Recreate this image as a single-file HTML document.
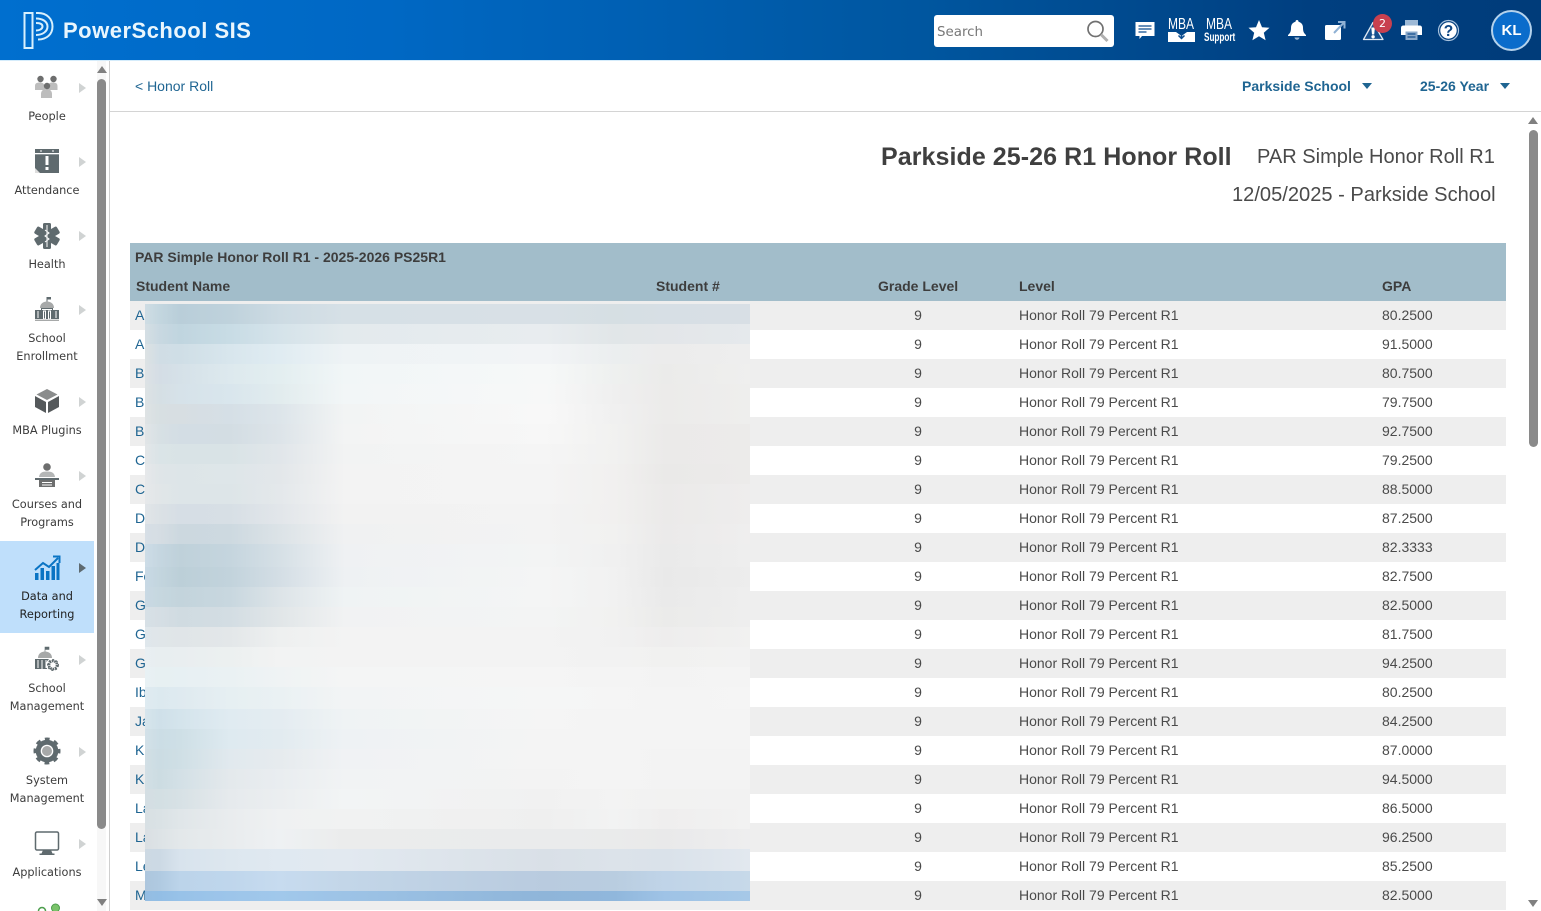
<!DOCTYPE html>
<html><head><meta charset="utf-8"><title>Honor Roll</title>
<style>
html,body{margin:0;padding:0;width:1541px;height:911px;overflow:hidden;background:#fff;font-family:"Liberation Sans",sans-serif;color:#444}
.a{position:absolute;white-space:nowrap}
#hdr{position:absolute;left:0;top:0;width:1541px;height:60px;background:linear-gradient(90deg,#006fcf 0,#0068c4 25%,#00569f 60%,#003f80 85%,#003c7a 100%)}
#hl{position:absolute;left:0;top:60px;width:1541px;height:1px;background:#d5ecfb}
.ni{position:absolute;left:0;width:94px;margin-top:1px;text-align:center;font:11.3px/18px "DejaVu Sans",sans-serif;color:#3c3c3c}
.ar{position:absolute;left:79px;width:0;height:0;border-left:7px solid #d0d3d3;border-top:5px solid transparent;border-bottom:5px solid transparent}
.ic{position:absolute;left:30px}
.r{position:absolute;left:130px;width:1376px;height:29px;font-size:14px;line-height:28px;color:#4a4a4a}
.r.g{background:#eeeeee}
.r span{position:absolute;top:0;white-space:nowrap}
.r .n{left:5px;color:#1f6592}
.r .gr{left:688px;width:200px;text-align:center}
.r .l{left:889px}
.r .p{left:1252px}
.h{position:absolute;font-weight:bold;font-size:14px;color:#3d3d3d;white-space:nowrap}
.t{font-size:14px;font-weight:bold;color:#1f6592}
.tr{position:absolute;width:0;height:0;border-top:6px solid #1f6592;border-left:5.5px solid transparent;border-right:5.5px solid transparent}
.m{position:absolute;left:145px;width:605px}
.mb{position:absolute;font-size:16px;line-height:16px;color:#fff;transform-origin:0 0;transform:scaleX(.75)}
</style></head>
<body>
<div id="hdr"></div><div id="hl"></div>
<svg class="a" style="left:22px;top:11px" width="32" height="38" viewBox="0 0 32 38" fill="none" stroke="#d8f0fd" stroke-width="2"><path d="M2.500 2h8v35h-8z"/><path d="M14 2h2c9 0 14.500 6 14.500 13.500S25 28.500 16 28.500"/><path d="M14 7.500c6.500 0 11.500 3 11.500 8S20.500 24 14 24"/><path d="M14 12c3.500 0 6.500 1 6.500 3.500S17.500 19.500 14 19.500"/></svg>
<div class="a" style="left:63px;top:17px;font-size:22px;line-height:28px;font-weight:bold;color:#e9f6fd;letter-spacing:.5px">PowerSchool SIS</div>

<div class="a" style="left:934px;top:15px;width:180px;height:32px;background:#fff;border-radius:3px"></div>
<div class="a" style="left:937px;top:24px;font:13.4px/18px 'DejaVu Sans',sans-serif;color:#777">Search</div>
<svg class="a" style="left:1085px;top:19px" width="26" height="24" fill="none"><circle cx="10.500" cy="10" r="7.500" stroke="#707070" stroke-width="1.700"/><path d="M16 15.500l6.500 6.500" stroke="#b0b0b0" stroke-width="3"/></svg>
<svg class="a" style="left:1134px;top:21px" width="22" height="20"><path d="M1.500 1h19v14H8l-2.500 3V15h-4z" fill="#fff"/><path d="M4.500 5h13M4.500 8h13M4.500 11h8" stroke="#0a4c8f" stroke-width="1.200"/></svg>
<div class="mb" style="left:1168px;top:17px">MBA</div>
<svg class="a" style="left:1168px;top:32px" width="27" height="10"><path d="M0 0h8l5.500 4L19 0h8v10H0z" fill="#fff"/><path d="M13.500 1v5M10.500 3.500l3 3 3-3" stroke="#0a4c8f" fill="none" stroke-width="1.500"/></svg>
<div class="mb" style="left:1206px;top:17px">MBA</div>
<div class="a" style="left:1204px;top:31px;font-size:12px;line-height:12px;font-weight:bold;color:#fff;transform-origin:0 0;transform:scaleX(.68)">Support</div>
<svg class="a" style="left:1247px;top:18px" width="24" height="24"><path d="M12 2l3 7.200 7.500.6-5.700 5 1.800 7.400L12 18.300l-6.600 3.900 1.800-7.400-5.700-5L9 9.200z" fill="#fff"/></svg>
<svg class="a" style="left:1286px;top:19px" width="22" height="23"><path d="M11 1c1 0 1.500.7 1.500 1.800 3 .8 4.500 3 4.500 6 0 4 1 5.500 3 7.200v1H2v-1c2-1.700 3-3.200 3-7.200 0-3 1.500-5.200 4.500-6C9.500 1.700 10 1 11 1z" fill="#fff"/><path d="M8.500 18.500h5c-.3 1.500-1.200 2.200-2.500 2.200s-2.200-.7-2.500-2.200z" fill="#9db9d6"/></svg>
<svg class="a" style="left:1323px;top:19px" width="24" height="22"><path d="M2 7.500Q2 6 3.500 6H18v13.500q0 1.500-1.500 1.500h-13Q2 21 2 19.500z" fill="#fff"/><path d="M11 14L21 3.500M15 3h6.500v6.500" stroke="#8fb1d4" stroke-width="2" fill="none"/></svg>
<svg class="a" style="left:1362px;top:20px" width="24" height="21"><path d="M11 2.500L21 19.500H1.500z" fill="#16508f" stroke="#dfe8f2" stroke-width="1.300" stroke-linejoin="round"/><path d="M9.300 7.500h3.600l-.7 7h-2.200z" fill="#fff"/><circle cx="11.100" cy="16.800" r="1.700" fill="#fff"/></svg>
<div class="a" style="left:1373px;top:14px;width:19px;height:19px;border-radius:50%;background:#c8404f;color:#fff;text-align:center;font:11px/19px 'DejaVu Sans',sans-serif">2</div>
<svg class="a" style="left:1400px;top:19px" width="23" height="22"><path d="M5 1h13v6H5z" fill="#9db9d6"/><path d="M3.500 6.500h16q2.500 0 2.500 2.500v7h-4.500v-3h-12v3H1V9q0-2.500 2.500-2.500z" fill="#fff"/><path d="M5.500 12.500h12v8.500h-12z" fill="#8aa8c9"/><path d="M7.500 15h8M7.500 18h8" stroke="#16508f" stroke-width="1.200"/></svg>
<svg class="a" style="left:1437px;top:19px" width="23" height="23"><circle cx="11.500" cy="11.500" r="10" fill="none" stroke="#a9c3de" stroke-width="1.200"/><circle cx="11.500" cy="11.500" r="8.200" fill="#fff"/><text x="11.500" y="17" text-anchor="middle" font-family="Liberation Sans" font-weight="bold" font-size="15.500" fill="#0d4582">?</text></svg>
<div class="a" style="left:1491px;top:10px;width:37px;height:37px;border:2px solid #b4d2ec;border-radius:50%;background:#0a6ccb;color:#fff;text-align:center;font-weight:bold;font-size:15px;line-height:37px">KL</div>

<!-- Sidebar -->
<div class="a" style="left:0;top:541px;width:94px;height:92px;background:#bfdffb"></div>
<div class="a" style="left:109px;top:61px;width:1px;height:850px;background:#cfcfcf"></div>
<div class="a" style="left:97px;top:61px;width:9px;height:850px;background:#f7f7f7"></div>
<div class="a" style="left:97px;top:79px;width:9px;height:750px;background:#8a8a8a;border-radius:5px"></div>
<div class="a" style="left:97px;top:66px;width:0;height:0;border-bottom:7px solid #808080;border-left:5px solid transparent;border-right:5px solid transparent"></div>
<div class="a" style="left:97px;top:899px;width:0;height:0;border-top:7px solid #808080;border-left:5px solid transparent;border-right:5px solid transparent"></div>

<svg class="ic" style="top:72px" width="34" height="30"><g fill="#bdbdbd"><path d="M5 14c0-3 2-3.500 5-3.500s4 1 4.500 3.500l1 4H5z"/><path d="M18 14c.5-2.500 1.500-3.500 4.500-3.500s5 .5 5 3.500v4H17z"/><path d="M11 22c0-3 2-5 5.500-5s5.500 2 5.500 5v4H11z"/></g><g fill="#6d6e6e"><circle cx="10.500" cy="7" r="3.200"/><circle cx="23.500" cy="7" r="3.200"/><circle cx="17" cy="14" r="3.200"/></g></svg>
<div class="ar" style="top:83px"></div><div class="ni" style="top:107px">People</div>

<svg class="ic" style="top:147px" width="34" height="30"><rect x="5" y="2" width="24" height="24" fill="#5f6a6e"/><rect x="5" y="6" width="24" height="1.300" fill="#fff"/><path d="M10 3.500h2v1h-2zM22 3.500h2v1h-2z" fill="#fff"/><path d="M15.500 9h3v9h-3zM15.500 20h3v3h-3z" fill="#fff"/><path d="M5 21l5 5H5z" fill="#ddd"/></svg>
<div class="ar" style="top:157px"></div><div class="ni" style="top:181px">Attendance</div>

<svg class="ic" style="top:221px" width="34" height="30"><g fill="#5f6a6e"><rect x="13" y="2" width="8" height="26" rx="1.500"/><rect x="13" y="2" width="8" height="26" rx="1.500" transform="rotate(60 17 15)"/><rect x="13" y="2" width="8" height="26" rx="1.500" transform="rotate(-60 17 15)"/></g><path d="M17 4v22M15 9l4 3-4 3 4 3-4 3" stroke="#fff" stroke-width="1" fill="none"/></svg>
<div class="ar" style="top:231px"></div><div class="ni" style="top:255px">Health</div>

<svg class="ic" style="top:295px" width="34" height="30"><path d="M17 2v5" stroke="#5f6a6e"/><path d="M17 2h4v2.500h-4z" fill="#5f6a6e"/><path d="M10 13c0-4 3-6.500 7-6.500s7 2.500 7 6.500z" fill="#a7a9a9"/><path d="M5 15h24v9H5z" fill="#5f6a6e"/><path d="M11 13h12v11H11z" fill="#5f6a6e"/><path d="M8 16v7M26 16v7M13.500 16h2v8h-2zM18.500 16h2v8h-2zM12 14.500h10" stroke="#fff" stroke-width="1" fill="none"/><path d="M5 25.300h24" stroke="#a7a9a9" stroke-width="1.300"/></svg>
<div class="ar" style="top:305px"></div><div class="ni" style="top:329px">School<br>Enrollment</div>

<svg class="ic" style="top:387px" width="34" height="30"><path d="M17 2l10.500 5.500L17 13 6.500 7.500z" fill="#8a8c8c"/><path d="M5 9l11 6v11L5 20z" fill="#55595b"/><path d="M29 9L18 15v11l11-6z" fill="#55595b"/></svg>
<div class="ar" style="top:397px"></div><div class="ni" style="top:421px">MBA Plugins</div>

<svg class="ic" style="top:461px" width="34" height="30"><circle cx="17" cy="6" r="3.800" fill="#6d6e6e"/><path d="M9 16c.5-4 3-5.500 8-5.500s7.500 1.500 8 5.500z" fill="#b4b6b6"/><path d="M5 17h24v2H5z" fill="#5f6a6e"/><path d="M9 19h16v7H9z" fill="#6d6e6e"/><path d="M12 21.500h10M12 24h10" stroke="#fff" stroke-width="1"/></svg>
<div class="ar" style="top:471px"></div><div class="ni" style="top:495px">Courses and<br>Programs</div>

<svg class="ic" style="top:553px" width="34" height="30"><path d="M5 17l8-7 6 4 9-9" stroke="#0a74c4" stroke-width="2" fill="none"/><path d="M23 3.500h6.500V10" stroke="#0a74c4" stroke-width="2" fill="none"/><g fill="#0a74c4"><rect x="5" y="20" width="3.500" height="7"/><rect x="10.500" y="15" width="3.500" height="12"/><rect x="16" y="18" width="3.500" height="9"/><rect x="21.500" y="13" width="3.500" height="14"/><rect x="26.500" y="10" width="3" height="17"/></g></svg>
<div class="ar" style="top:563px;border-left-color:#5e6a70"></div><div class="ni" style="top:587px;color:#222">Data and<br>Reporting</div>

<svg class="ic" style="top:645px" width="34" height="30"><path d="M15 2v5M15 2h4v2.500h-4z" stroke="#5f6a6e" fill="#5f6a6e" stroke-width=".6"/><path d="M8 13c0-4 3-6.500 7-6.500s7 2.500 7 6.500z" fill="#a7a9a9"/><path d="M5 14h17v10H5z" fill="#5f6a6e"/><path d="M8 15v8M12 15v9M16 15v8" stroke="#fff"/><circle cx="23" cy="20" r="7" fill="#fff"/><circle cx="23" cy="20" r="4" fill="none" stroke="#5f6a6e" stroke-width="2.600" stroke-dasharray="1.800 .7"/><circle cx="23" cy="20" r="5.300" fill="none" stroke="#5f6a6e" stroke-width="1.300" stroke-dasharray="2 2"/></svg>
<div class="ar" style="top:655px"></div><div class="ni" style="top:679px">School<br>Management</div>

<svg class="ic" style="top:737px" width="34" height="30"><circle cx="17" cy="14" r="8.800" fill="none" stroke="#5f6a6e" stroke-width="5"/><circle cx="17" cy="14" r="5" fill="#a7a9a9"/><circle cx="17" cy="14" r="12" fill="none" stroke="#5f6a6e" stroke-width="3" stroke-dasharray="4.800 4.600" stroke-dashoffset="2.400"/></svg>
<div class="ar" style="top:747px"></div><div class="ni" style="top:771px">System<br>Management</div>

<svg class="ic" style="top:829px" width="34" height="30"><rect x="5.500" y="3" width="23" height="18" rx="1.500" fill="none" stroke="#5f6a6e" stroke-width="1.500"/><path d="M13 21h8l1.500 3.500h2V26h-15v-1.500h2z" fill="#5f6a6e"/></svg>
<div class="ar" style="top:839px"></div><div class="ni" style="top:863px">Applications</div>
<svg class="a" style="left:35px;top:900px" width="30" height="11"><circle cx="7" cy="11" r="3.500" fill="none" stroke="#4d9e4d" stroke-width="1.500"/><circle cx="20.500" cy="8" r="4" fill="#7ac36a" stroke="#4d9e4d"/></svg>

<!-- Top content bar -->
<div class="a" style="left:110px;top:111px;width:1431px;height:1px;background:#d4d4d4"></div>
<div class="a" style="left:135px;top:78px;font-size:14px;line-height:16px;color:#1f6592">&lt; Honor Roll</div>
<div class="a t" style="left:1242px;top:78px;line-height:16px">Parkside School</div>
<div class="tr" style="left:1362px;top:83px"></div>
<div class="a t" style="left:1420px;top:78px;line-height:16px">25-26 Year</div>
<div class="tr" style="left:1500px;top:83px"></div>

<!-- Main scrollbar -->
<div class="a" style="left:1529px;top:130px;width:9px;height:317px;background:#8a8a8a;border-radius:5px"></div>
<div class="a" style="left:1528px;top:117px;width:0;height:0;border-bottom:7px solid #808080;border-left:5px solid transparent;border-right:5px solid transparent"></div>
<div class="a" style="left:1528px;top:900px;width:0;height:0;border-top:7px solid #808080;border-left:5px solid transparent;border-right:5px solid transparent"></div>

<!-- Titles -->
<div class="a" style="left:881px;top:142px;font-size:25px;line-height:30px;font-weight:bold;color:#3f3f3f;letter-spacing:.07px">Parkside 25-26 R1 Honor Roll</div>
<div class="a" style="left:1257px;top:144px;font-size:20.050px;line-height:26px;color:#4a4a4a">PAR Simple Honor Roll R1</div>
<div class="a" style="left:1232px;top:182px;font-size:20.100px;line-height:26px;color:#4a4a4a">12/05/2025 - Parkside School</div>

<!-- Table -->
<div class="a" style="left:130px;top:243px;width:1376px;height:58px;background:#a2bdca"></div>
<div class="h" style="left:135px;top:249px">PAR Simple Honor Roll R1 - 2025-2026 PS25R1</div>
<div class="h" style="left:136px;top:278px">Student Name</div>
<div class="h" style="left:656px;top:278px">Student #</div>
<div class="h" style="left:878px;top:278px">Grade Level</div>
<div class="h" style="left:1019px;top:278px">Level</div>
<div class="h" style="left:1382px;top:278px">GPA</div>

<div class="r g" style="top:301px"><span class="n">A</span><span class="gr">9</span><span class="l">Honor Roll 79 Percent R1</span><span class="p">80.2500</span></div>
<div class="r" style="top:330px"><span class="n">A</span><span class="gr">9</span><span class="l">Honor Roll 79 Percent R1</span><span class="p">91.5000</span></div>
<div class="r g" style="top:359px"><span class="n">B</span><span class="gr">9</span><span class="l">Honor Roll 79 Percent R1</span><span class="p">80.7500</span></div>
<div class="r" style="top:388px"><span class="n">B</span><span class="gr">9</span><span class="l">Honor Roll 79 Percent R1</span><span class="p">79.7500</span></div>
<div class="r g" style="top:417px"><span class="n">B</span><span class="gr">9</span><span class="l">Honor Roll 79 Percent R1</span><span class="p">92.7500</span></div>
<div class="r" style="top:446px"><span class="n">C</span><span class="gr">9</span><span class="l">Honor Roll 79 Percent R1</span><span class="p">79.2500</span></div>
<div class="r g" style="top:475px"><span class="n">C</span><span class="gr">9</span><span class="l">Honor Roll 79 Percent R1</span><span class="p">88.5000</span></div>
<div class="r" style="top:504px"><span class="n">D</span><span class="gr">9</span><span class="l">Honor Roll 79 Percent R1</span><span class="p">87.2500</span></div>
<div class="r g" style="top:533px"><span class="n">D</span><span class="gr">9</span><span class="l">Honor Roll 79 Percent R1</span><span class="p">82.3333</span></div>
<div class="r" style="top:562px"><span class="n">Fo</span><span class="gr">9</span><span class="l">Honor Roll 79 Percent R1</span><span class="p">82.7500</span></div>
<div class="r g" style="top:591px"><span class="n">G</span><span class="gr">9</span><span class="l">Honor Roll 79 Percent R1</span><span class="p">82.5000</span></div>
<div class="r" style="top:620px"><span class="n">G</span><span class="gr">9</span><span class="l">Honor Roll 79 Percent R1</span><span class="p">81.7500</span></div>
<div class="r g" style="top:649px"><span class="n">G</span><span class="gr">9</span><span class="l">Honor Roll 79 Percent R1</span><span class="p">94.2500</span></div>
<div class="r" style="top:678px"><span class="n">Ib</span><span class="gr">9</span><span class="l">Honor Roll 79 Percent R1</span><span class="p">80.2500</span></div>
<div class="r g" style="top:707px"><span class="n">Ja</span><span class="gr">9</span><span class="l">Honor Roll 79 Percent R1</span><span class="p">84.2500</span></div>
<div class="r" style="top:736px"><span class="n">K</span><span class="gr">9</span><span class="l">Honor Roll 79 Percent R1</span><span class="p">87.0000</span></div>
<div class="r g" style="top:765px"><span class="n">K</span><span class="gr">9</span><span class="l">Honor Roll 79 Percent R1</span><span class="p">94.5000</span></div>
<div class="r" style="top:794px"><span class="n">La</span><span class="gr">9</span><span class="l">Honor Roll 79 Percent R1</span><span class="p">86.5000</span></div>
<div class="r g" style="top:823px"><span class="n">La</span><span class="gr">9</span><span class="l">Honor Roll 79 Percent R1</span><span class="p">96.2500</span></div>
<div class="r" style="top:852px"><span class="n">Le</span><span class="gr">9</span><span class="l">Honor Roll 79 Percent R1</span><span class="p">85.2500</span></div>
<div class="r g" style="top:881px"><span class="n">Ma</span><span class="gr">9</span><span class="l">Honor Roll 79 Percent R1</span><span class="p">82.5000</span></div>

<!-- Blurred redaction block -->
<div class="m" style="top:304px;height:20px;background:linear-gradient(90deg,#cfdde4 0,#c3d6df 15px,#b9ced9 35px,#bfd2dc 85px,#cddbe3 135px,#d6e0e6 200px,#d8e0e6 400px,#d6dfe3 470px,#d7dfe5 520px,#d8dfe5 605px)"></div>
<div class="m" style="top:324px;height:20px;background:linear-gradient(90deg,#d5dfe4 0,#c8d8e1 15px,#c0d5df 35px,#c8dce5 85px,#d5e3ea 135px,#e3eaed 200px,#e8ecef 400px,#e1e6e8 470px,#e3e6e9 520px,#e5e9ec 605px)"></div>
<div class="m" style="top:344px;height:20px;background:linear-gradient(90deg,#dde2e4 0,#d0dde5 15px,#cfdee6 35px,#d8e6ed 85px,#e0ecf2 135px,#eef3f5 200px,#f2f4f6 400px,#ebeeef 470px,#ececec 520px,#eeeeee 605px)"></div>
<div class="m" style="top:364px;height:20px;background:linear-gradient(90deg,#dde2e5 0,#d4dde5 15px,#d5e1e8 35px,#dde9ee 85px,#e3eef0 135px,#f1f6f7 200px,#f6f8f8 400px,#eef0ef 470px,#ebebea 520px,#efefee 605px)"></div>
<div class="m" style="top:384px;height:20px;background:linear-gradient(90deg,#dde2e4 0,#d5dfe4 15px,#d6e2e9 35px,#d9e6ed 85px,#e2ecee 135px,#f2f6f7 200px,#f7f8f8 400px,#efefef 470px,#ecebea 520px,#eeeeed 605px)"></div>
<div class="m" style="top:404px;height:20px;background:linear-gradient(90deg,#dee3e4 0,#d7dfe2 15px,#d7dee2 35px,#d5dfe6 85px,#dde5ea 135px,#f2f4f4 200px,#f8f8f8 400px,#f0f0f0 470px,#ecebea 520px,#eeeeed 605px)"></div>
<div class="m" style="top:424px;height:20px;background:linear-gradient(90deg,#e1e5e7 0,#d7e0e4 15px,#d3dde4 35px,#d3dde3 85px,#dde4e9 135px,#f3f4f4 200px,#f7f7f7 400px,#f1f1f0 470px,#ebeae9 520px,#ecebea 605px)"></div>
<div class="m" style="top:444px;height:20px;background:linear-gradient(90deg,#e3e6e8 0,#dae4e7 15px,#d9e3e6 35px,#d9e3e6 85px,#e1e6ea 135px,#f2f3f3 200px,#f5f5f5 400px,#f1f1f0 470px,#ebeae9 520px,#ecebea 605px)"></div>
<div class="m" style="top:464px;height:20px;background:linear-gradient(90deg,#e6e8ea 0,#dfe5e8 15px,#dde5e8 35px,#dee6e9 85px,#e3e7ea 135px,#f3f3f3 200px,#f4f4f4 400px,#f1f0ef 470px,#eae9e8 520px,#ecebea 605px)"></div>
<div class="m" style="top:484px;height:20px;background:linear-gradient(90deg,#e6e8ea 0,#e1e6e8 15px,#dde5e8 35px,#dde5e8 85px,#e4e8eb 135px,#f3f3f3 200px,#f4f4f4 400px,#f1f0ef 470px,#ebeae9 520px,#eeeded 605px)"></div>
<div class="m" style="top:504px;height:20px;background:linear-gradient(90deg,#e1e5e8 0,#dbe1e5 15px,#d6dee5 35px,#d7dfe5 85px,#e2e6ea 135px,#f2f2f2 200px,#f3f3f3 400px,#f1f0ef 470px,#ebeae9 520px,#eeeded 605px)"></div>
<div class="m" style="top:524px;height:20px;background:linear-gradient(90deg,#d7dfe6 0,#d5dde3 15px,#ccd8df 35px,#cdd9e0 85px,#dce3e7 135px,#f0f1f2 200px,#f3f3f3 400px,#f1f1f0 470px,#ebeaea 520px,#efeeee 605px)"></div>
<div class="m" style="top:544px;height:23px;background:linear-gradient(90deg,#cddce7 0,#c5d6e0 15px,#bfd1da 35px,#c5d5de 85px,#d6e0e6 135px,#eff1f3 200px,#f3f4f4 400px,#f0f0f0 470px,#eaeaea 520px,#eeeeee 605px)"></div>
<div class="m" style="top:567px;height:20px;background:linear-gradient(90deg,#c8d9e5 0,#c3d5de 15px,#bccfd8 35px,#c2d3dc 85px,#d4dee5 135px,#eef1f3 200px,#f4f5f5 400px,#f1f1f1 470px,#e9e9e9 520px,#ededed 605px)"></div>
<div class="m" style="top:587px;height:20px;background:linear-gradient(90deg,#c9d9e4 0,#c6d7df 15px,#c3d4dc 35px,#c8d7df 85px,#dde4e8 135px,#eff3f4 200px,#f4f5f5 400px,#f1f1f1 470px,#eaeaea 520px,#eeeeee 605px)"></div>
<div class="m" style="top:607px;height:20px;background:linear-gradient(90deg,#d7e0e6 0,#d5dee4 15px,#d0dbe1 35px,#d3dde3 85px,#e1e6e8 135px,#f1f2f3 200px,#f3f4f4 400px,#f1f1f0 470px,#ebebea 520px,#eeeeee 605px)"></div>
<div class="m" style="top:627px;height:20px;background:linear-gradient(90deg,#dfe7ec 0,#e0e6e9 15px,#e0e5e8 35px,#e3e7e9 85px,#eef0f0 135px,#f3f3f3 200px,#f3f3f3 400px,#f1f1f1 470px,#eeeded 520px,#f1f1f0 605px)"></div>
<div class="m" style="top:647px;height:20px;background:linear-gradient(90deg,#e9eff2 0,#e8eef0 15px,#e9eef0 35px,#ecf0f0 85px,#f2f3f3 135px,#f3f3f3 200px,#f3f3f3 400px,#f2f2f2 470px,#f1f1f0 520px,#f2f2f2 605px)"></div>
<div class="m" style="top:667px;height:20px;background:linear-gradient(90deg,#e8f1f4 0,#e7f0f2 15px,#e7f0f3 35px,#eaf1f3 85px,#eff3f4 135px,#f4f5f5 200px,#f5f5f5 400px,#f4f4f4 470px,#f3f3f3 520px,#f4f4f4 605px)"></div>
<div class="m" style="top:687px;height:22px;background:linear-gradient(90deg,#dfebf1 0,#dce9ef 15px,#dfeaf0 35px,#e6eff2 85px,#eaf1f3 135px,#f2f4f5 200px,#f5f6f6 400px,#f5f5f5 470px,#f4f4f4 520px,#f5f5f5 605px)"></div>
<div class="m" style="top:709px;height:20px;background:linear-gradient(90deg,#d6e5ec 0,#cfe0e9 15px,#d4e4ec 35px,#e0ebf1 85px,#e4ecf1 135px,#eff3f4 200px,#f5f5f5 400px,#f4f4f4 470px,#f4f4f4 520px,#f4f4f4 605px)"></div>
<div class="m" style="top:729px;height:20px;background:linear-gradient(90deg,#d3e1e8 0,#cbdde5 15px,#cedfe6 35px,#deeaf0 85px,#e2ebf0 135px,#eef2f4 200px,#f4f4f4 400px,#f4f4f4 605px)"></div>
<div class="m" style="top:749px;height:20px;background:linear-gradient(90deg,#d2dfe5 0,#cbdce3 15px,#cfdfe5 35px,#e1e9ee 85px,#e6ebee 135px,#f0f2f4 200px,#f4f4f4 400px,#f4f4f4 470px,#f3f3f3 520px,#f3f3f3 605px)"></div>
<div class="m" style="top:769px;height:20px;background:linear-gradient(90deg,#d2dfe5 0,#ccdce2 15px,#d3e0e6 35px,#e4e9ec 85px,#e9edf0 135px,#f1f3f4 200px,#f3f3f3 400px,#f4f4f4 470px,#f3f3f3 520px,#f3f3f3 605px)"></div>
<div class="m" style="top:789px;height:20px;background:linear-gradient(90deg,#d4dee3 0,#d3dfe3 15px,#d7e1e5 35px,#e6eaed 85px,#ebeef0 135px,#f2f4f5 200px,#f1f1f1 400px,#f3f3f3 470px,#f2f2f1 520px,#f2f2f2 605px)"></div>
<div class="m" style="top:809px;height:20px;background:linear-gradient(90deg,#d8e0e4 0,#dae2e5 15px,#e0e6e9 35px,#e9ecee 85px,#eff1f2 135px,#f1f2f2 200px,#efefef 400px,#f2f3f3 470px,#efeeee 520px,#f2f2f2 605px)"></div>
<div class="m" style="top:829px;height:20px;background:linear-gradient(90deg,#dadfe3 0,#dde3e6 15px,#e3e8ea 35px,#e9ecee 85px,#eef1f3 135px,#ebecec 200px,#eaebec 400px,#eaebeb 470px,#e9e9ea 520px,#eeeeef 605px)"></div>
<div class="m" style="top:849px;height:22px;background:linear-gradient(90deg,#cdd9e3 0,#ccd9e4 15px,#d8e3ed 35px,#dde7ef 85px,#e0e9f1 135px,#e2e9f0 200px,#d9e0e7 400px,#dce3ea 470px,#dae2ea 520px,#e2e8ef 605px)"></div>
<div class="m" style="top:871px;height:20px;background:linear-gradient(90deg,#adc6dd 0,#b0cae1 15px,#bcd4ea 35px,#bfd6ec 85px,#c7dbef 135px,#c3d6e8 200px,#b9cbdf 400px,#b9cde0 470px,#c0d4e8 520px,#c7d9e9 605px)"></div>
<div class="m" style="top:891px;height:10px;background:linear-gradient(90deg,#94bde2 0,#93bee5 15px,#98c2e8 35px,#9dc5ea 85px,#a1c8eb 135px,#9dc3e6 200px,#8fb5d9 400px,#90b7dc 470px,#9fc3e6 520px,#a6c8e7 605px)"></div>
</body></html>
